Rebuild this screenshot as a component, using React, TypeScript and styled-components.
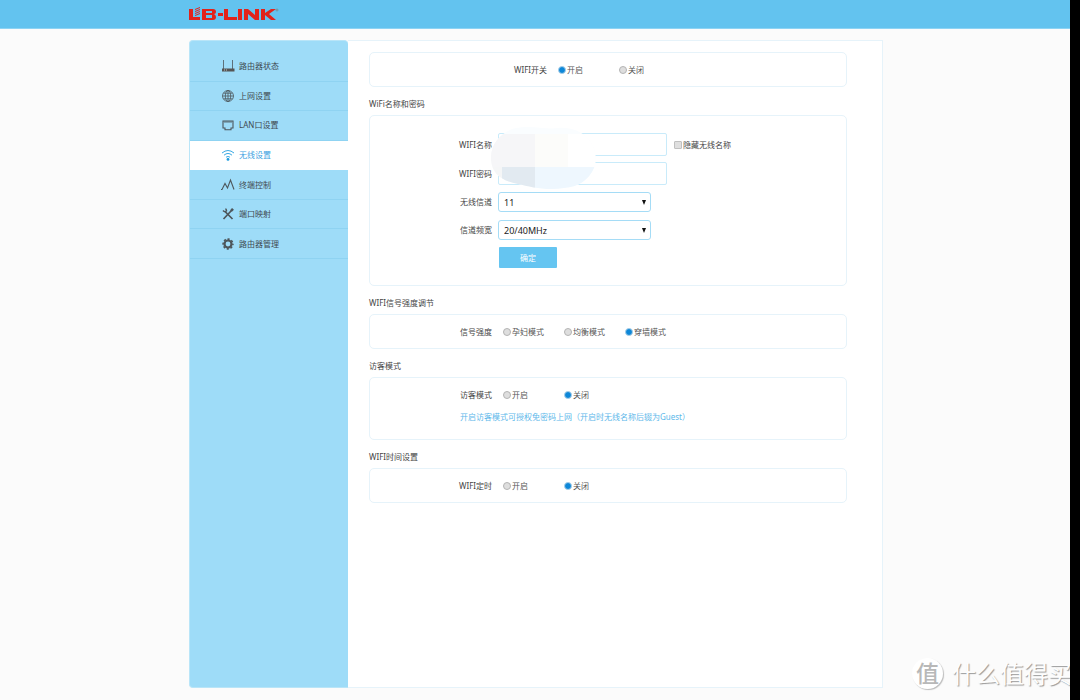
import React, { useId, useState } from "react";
import styled, { createGlobalStyle } from "styled-components";

const sky = "#63c3ef";
const paleSky = "#9edcf8";
const line = "#e6f3fa";

const GlobalStyle = createGlobalStyle`
  * { box-sizing: border-box; }
  body {
    margin: 0;
    background: #fbfbfb;
    color: #444;
    font: 8px/12px "Noto Sans", "Noto Sans CJK SC", sans-serif;
  }
  button, input, select { font: inherit; color: inherit; }
`;

const Page = styled.div`
  position: relative;
  display: flex;
  flex-direction: column;
  min-height: 100vh;
  overflow: hidden;
  border-right: 10px solid #000;
`;

const Container = styled.div`
  width: 694px;
  max-width: 100%;
  margin: 0 auto;
`;

const Header = styled.header`
  height: 29px;
  background: ${sky};
  border-bottom: 1px solid #8dd3f4;
`;

const LogoLink = styled.a`
  display: block;
  width: 92px;
  height: 28px;
  svg { display: block; }
`;

const Body = styled.div`
  flex: 1;
  display: flex;
  padding: 11px 0 12px 2px;
`;

const Columns = styled(Container)`
  display: flex;
`;

const Sidebar = styled.nav`
  flex: none;
  width: 159px;
  padding-top: 11px;
  background: ${paleSky};
  border: 1px solid #b9e5f8;
  border-right: 0;
  border-radius: 4px 4px 0 4px;
`;

const Menu = styled.ul`
  display: grid;
  grid-auto-rows: 1fr;
  height: 207px;
  margin: 0;
  padding: 0;
  list-style: none;
`;

const MenuItem = styled.li<{ $active?: boolean }>`
  display: flex;
  background: ${(p) => (p.$active ? "#fff" : "transparent")};
  border-bottom: 1px solid ${(p) => (p.$active ? "#fff" : "#8fd3f2")};
`;

const MenuLink = styled.a<{ $active?: boolean }>`
  flex: 1;
  display: flex;
  align-items: center;
  gap: 4px;
  padding-left: 31px;
  color: ${(p) => (p.$active ? "#3d9fdf" : "#3f4a50")};
  text-decoration: none;
  svg { flex: none; }
`;

const Content = styled.main`
  flex: 1;
  min-width: 0;
  padding: 11px 35px 11px 21px;
  background: #fff;
  border: 1px solid ${line};
  border-left: 0;
`;

const Heading = styled.h2`
  margin: 0;
  padding: 11px 0 5px;
  font-size: 8px;
  line-height: 12px;
  font-weight: 400;
`;

const Card = styled.div`
  border: 1px solid ${line};
  border-radius: 5px;
`;

const RadioLine = styled.div<{ $wide?: boolean }>`
  display: grid;
  grid-template-columns: ${(p) => (p.$wide ? "177px" : "122px")} 1fr;
  align-items: center;
  gap: 11px;
  height: 33px;
`;

const Options = styled.div`
  display: flex;
`;

const Option = styled.label`
  display: flex;
  align-items: center;
  gap: 1px;
  width: 61px;
  white-space: nowrap;
  color: #555;
`;

const RowLabel = styled.label`
  text-align: right;
  white-space: nowrap;
`;

const RadioInput = styled.input`
  appearance: none;
  flex: none;
  width: 8px;
  height: 8px;
  margin: 0;
  border: 1px solid #b4b4b4;
  border-radius: 50%;
  background: #dedede;
  &:checked {
    border-color: #a9cfe8;
    background: #0d87d8;
  }
`;

const CheckInput = styled.input`
  appearance: none;
  flex: none;
  width: 8px;
  height: 8px;
  margin: 0;
  border: 1px solid #c0c0c0;
  border-radius: 1px;
  background: #dfdfdf;
  &:checked { background: #0d87d8; }
`;

const Form = styled.form`
  position: relative;
  padding: 14px 0 17px;
`;

const FormRow = styled.div<{ $compact?: boolean }>`
  display: grid;
  grid-template-columns: 122px auto 1fr;
  align-items: center;
  column-gap: 6px;
  height: ${(p) => (p.$compact ? 28 : 29)}px;
`;

const TextInput = styled.input`
  width: 169px;
  height: 23px;
  padding: 0 6px;
  border: 1px solid #c9ebfa;
  border-radius: 2px;
  background: #fff;
  outline: none;
`;

const HideOption = styled.label`
  display: flex;
  align-items: center;
  gap: 1px;
  padding: 1px 0 0 1px;
`;

const SelectBox = styled.div`
  position: relative;
  width: 153px;
  height: 20px;
  svg {
    position: absolute;
    top: 8px;
    right: 5px;
    pointer-events: none;
  }
`;

const Select = styled.select`
  appearance: none;
  display: block;
  width: 100%;
  height: 20px;
  padding: 1px 5px 0;
  border: 1px solid #a5dcf6;
  border-radius: 3px;
  background: #fff;
  color: #222;
  font-size: 9px;
`;

const Submit = styled.button`
  display: block;
  width: 58px;
  height: 21px;
  margin: 3px 0 0 129px;
  padding: 0;
  border: 0;
  border-radius: 1px;
  background: #65c5f1;
  color: #fff;
`;

const Note = styled.p`
  margin: 0;
  padding: 0 0 16px 90px;
  color: #5db8ea;
`;

const Redaction = styled.svg`
  position: absolute;
  top: 10px;
  left: 120px;
  pointer-events: none;
`;

const Watermark = styled.div`
  position: absolute;
  right: -2px;
  bottom: 9px;
  display: flex;
  align-items: center;
  gap: 9px;
  color: #fdfdfd;
  font: 24px/34px "Noto Sans CJK SC", sans-serif;
  text-shadow: 1px 1px 1px #999;
  white-space: nowrap;
`;

const WatermarkText = styled.span`
  padding-bottom: 1px;
`;

const Seal = styled.span`
  width: 31px;
  height: 31px;
  border-radius: 50%;
  background: #fff;
  box-shadow: 1px 1px 1px #bbb;
  color: #b8b8b8;
  font-size: 23px;
  font-weight: 500;
  line-height: 29px;
  text-align: center;
  text-shadow: none;
`;

const Logo = () => (
  <svg width="92" height="28" viewBox="0 0 92 28" role="img" aria-label="LB-LINK">
    <g fill="#e2231a">
      <path d="M1 9h4v8h7v3H1z" />
      <path d="M7 9l5-2v1L7 10zM7 11l5-2v1l-5 2zM7 13l5-2v1l-5 2zM7 15l5-2v1l-5 2z" />
      <path fillRule="evenodd" d="M14 9h11q3 0 3 3 0 2-2 2 2 1 2 3 0 3-3 3H14zm4 2v2h6v-2zm0 4v3h6v-3z" />
      <path d="M30 13h5v3h-5z" />
      <path d="M36 9h4v8h9v3H36z" />
      <path d="M50 9h4v11h-4z" />
      <path d="M56 9h4l7 6V9h4v11h-4l-7-6v6h-4z" />
      <path d="M73 9h4v4l6-4h5l-7 5 7 6h-5l-6-5v5h-4z" />
    </g>
    <circle cx="89" cy="10" r="1" fill="none" stroke="#77909c" />
  </svg>
);

type IconName = "router" | "globe" | "port" | "wifi" | "chart" | "tools" | "gear";

const shapes: Record<IconName, React.ReactNode> = {
  router: (
    <>
      <path d="M2.500 1v9M11.500 1v9" />
      <path d="M1 9.500h12.500v3H1z" fill="#555" stroke="none" />
      <path d="M3 11h1M5 11h1" stroke="#ddd" />
    </>
  ),
  globe: (
    <>
      <circle cx="7" cy="7" r="5.500" />
      <ellipse cx="7" cy="7" rx="2.700" ry="5.500" />
      <path d="M7 1.500v11M1.500 7h11M2.500 4.200h9M2.500 9.800h9" />
    </>
  ),
  port: (
    <>
      <path strokeWidth="1.100" d="M2 3h10v7h-2v1.800H4V10H2z" />
      <path d="M4 3v2M6 3v2M8 3v2M10 3v2" />
    </>
  ),
  wifi: (
    <>
      <path strokeWidth="1" d="M1 5q6-5 12 0M3 7.200q4-3.500 8 0M5 9.200q2-1.500 4 0" />
      <circle cx="7" cy="11.400" r="1.400" fill="#1c9de0" stroke="none" />
    </>
  ),
  chart: <path strokeWidth="1.100" d="M0 11.500h1l3-6 2.500 4.500L9.500 2l3.500 9.500" />,
  tools: (
    <>
      <path strokeWidth="1.700" d="M4 4.500l7.500 7.500M10.500 3.500l-8 8.500" />
      <path strokeWidth="1.400" d="M2 3.500q2 2.200 3.500.3 0-1.500-1-2.200" />
      <path strokeWidth="2.600" d="M10 4l2-2.200" />
    </>
  ),
  gear: (
    <>
      <circle cx="7" cy="7" r="3.500" strokeWidth="2.200" />
      <circle cx="7" cy="7" r="4.900" strokeWidth="1.600" strokeDasharray="2.100 1.748" strokeDashoffset="1.050" />
    </>
  ),
};

const Icon = ({ name }: { name: IconName }) => (
  <svg width="14" height="14" viewBox="0 0 14 14" fill="none" stroke={name === "wifi" ? "#3aa9e3" : "#4d565b"} strokeWidth=".8" aria-hidden="true">
    {shapes[name]}
  </svg>
);

const menu: { icon: IconName; text: string; active?: boolean }[] = [
  { icon: "router", text: "路由器状态" },
  { icon: "globe", text: "上网设置" },
  { icon: "port", text: "LAN口设置" },
  { icon: "wifi", text: "无线设置", active: true },
  { icon: "chart", text: "终端控制" },
  { icon: "tools", text: "端口映射" },
  { icon: "gear", text: "路由器管理" },
];

type RadioRowProps = { label: string; options: string[]; initial: number; wide?: boolean };

const RadioRow = ({ label, options, initial, wide }: RadioRowProps) => {
  const id = useId();
  const [value, setValue] = useState(initial);
  return (
    <RadioLine $wide={wide} role="radiogroup" aria-labelledby={id}>
      <RowLabel as="span" id={id}>{label}</RowLabel>
      <Options>
        {options.map((text, i) => (
          <Option key={text}>
            <RadioInput type="radio" name={id} checked={value === i} onChange={() => setValue(i)} />
            {text}
          </Option>
        ))}
      </Options>
    </RadioLine>
  );
};

const Arrow = () => (
  <svg width="4" height="5" viewBox="0 0 4 5" aria-hidden="true">
    <path d="M0 0h4L2 5z" fill="#111" />
  </svg>
);

export default function App() {
  return (
    <Page>
      <GlobalStyle />
      <Header>
        <Container>
          <LogoLink href="#"><Logo /></LogoLink>
        </Container>
      </Header>
      <Body>
        <Columns>
          <Sidebar>
            <Menu>
              {menu.map((item) => (
                <MenuItem key={item.text} $active={item.active}>
                  <MenuLink href="#" $active={item.active}>
                    <Icon name={item.icon} />
                    {item.text}
                  </MenuLink>
                </MenuItem>
              ))}
            </Menu>
          </Sidebar>
          <Content>
            <Card>
              <RadioRow wide label="WIFI开关" options={["开启", "关闭"]} initial={0} />
            </Card>

            <Heading>WiFi名称和密码</Heading>
            <Card>
              <Form onSubmit={(e) => e.preventDefault()}>
                <FormRow>
                  <RowLabel htmlFor="ssid">WIFI名称</RowLabel>
                  <TextInput id="ssid" type="text" />
                  <HideOption><CheckInput type="checkbox" />隐藏无线名称</HideOption>
                </FormRow>
                <FormRow>
                  <RowLabel htmlFor="key">WIFI密码</RowLabel>
                  <TextInput id="key" type="text" />
                </FormRow>
                <FormRow $compact>
                  <RowLabel htmlFor="channel">无线信道</RowLabel>
                  <SelectBox>
                    <Select id="channel"><option>11</option></Select>
                    <Arrow />
                  </SelectBox>
                </FormRow>
                <FormRow $compact>
                  <RowLabel htmlFor="bandwidth">信道频宽</RowLabel>
                  <SelectBox>
                    <Select id="bandwidth"><option>20/40MHz</option></Select>
                    <Arrow />
                  </SelectBox>
                </FormRow>
                <Submit type="submit">确定</Submit>
                <Redaction width="107" height="64" viewBox="0 0 107 64" aria-hidden="true">
                  <clipPath id="smudge">
                    <path d="M1 34C0 18 10 8 22 3 40-2 55 4 68 2 80 1 92 5 99 14 106 22 107 34 104 42 99 54 88 61 74 62 58 65 40 61 28 58 12 55 2 48 1 34z" />
                  </clipPath>
                  <g clipPath="url(#smudge)">
                    <path fill="#fafdff" d="M0 0h107v64H0z" />
                    <path fill="#f6f6f8" d="M0 8h45v33H0z" />
                    <path fill="#fcfcfa" d="M45 8h33v33H45z" />
                    <path fill="#fff" d="M78 8h29v33H78z" />
                    <path fill="#f5f6f7" d="M0 41h12v23H0z" />
                    <path fill="#e2eaf1" d="M12 41h33v23H12z" />
                    <path fill="#eef7fe" d="M45 41h62v23H45z" />
                  </g>
                </Redaction>
              </Form>
            </Card>

            <Heading>WIFI信号强度调节</Heading>
            <Card>
              <RadioRow label="信号强度" options={["孕妇模式", "均衡模式", "穿墙模式"]} initial={2} />
            </Card>

            <Heading>访客模式</Heading>
            <Card>
              <RadioRow label="访客模式" options={["开启", "关闭"]} initial={1} />
              <Note>开启访客模式可授权免密码上网（开启时无线名称后辍为Guest）</Note>
            </Card>

            <Heading>WIFI时间设置</Heading>
            <Card>
              <RadioRow label="WIFI定时" options={["开启", "关闭"]} initial={1} />
            </Card>
          </Content>
        </Columns>
      </Body>
      <Watermark>
        <Seal>值</Seal>
        <WatermarkText>什么值得买</WatermarkText>
      </Watermark>
    </Page>
  );
}
